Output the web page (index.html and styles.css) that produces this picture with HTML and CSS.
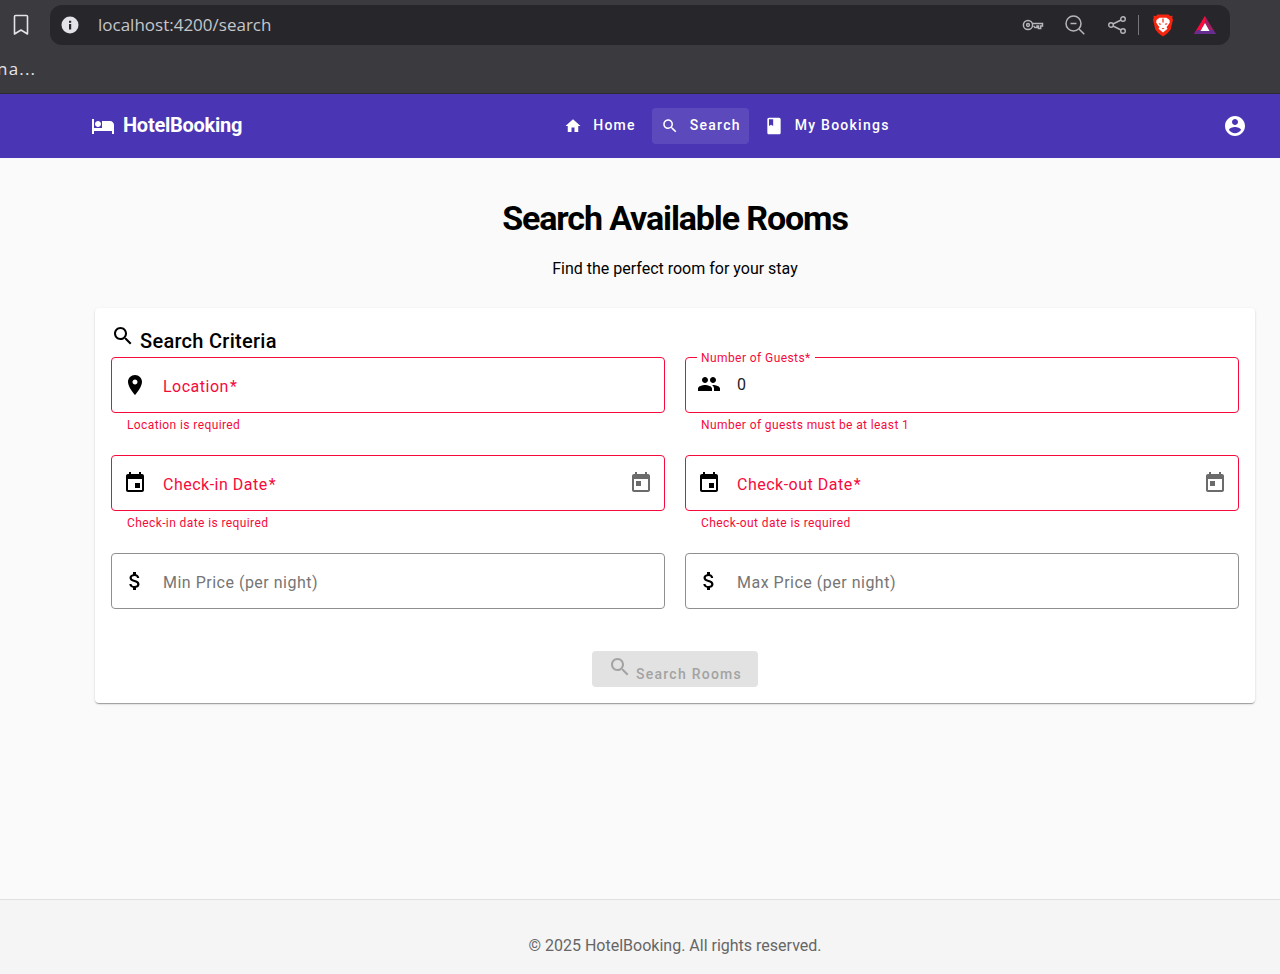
FILE: index.html
```html
<!doctype html>
<html>
<head>
<meta charset="utf-8">
<meta name="viewport" content="width=device-width, initial-scale=1.0">
<link rel="stylesheet" href="styles.css">
<title>HotelBooking</title>
</head>
<body>
<svg class="sprite" width="0" height="0">
  <symbol id="i-hotel" viewBox="0 0 24 24"><path d="M7 13c1.66 0 3-1.34 3-3S8.66 7 7 7s-3 1.34-3 3 1.34 3 3 3zm12-6h-8v7H3V5H1v15h2v-3h18v3h2v-9c0-2.21-1.79-4-4-4z"/></symbol>
  <symbol id="i-home" viewBox="0 0 24 24"><path d="M10 20v-6h4v6h5v-8h3L12 3 2 12h3v8z"/></symbol>
  <symbol id="i-search" viewBox="0 0 24 24"><path d="M15.5 14h-.79l-.28-.27C15.41 12.59 16 11.11 16 9.5 16 5.91 13.09 3 9.5 3S3 5.91 3 9.5 5.91 16 9.5 16c1.61 0 3.09-.59 4.23-1.57l.27.28v.79l5 4.99L20.49 19l-4.99-5zm-6 0C7.01 14 5 11.99 5 9.5S7.01 5 9.5 5 14 7.01 14 9.5 11.99 14 9.5 14z"/></symbol>
  <symbol id="i-book" viewBox="0 0 24 24"><path d="M18 2H6c-1.1 0-2 .9-2 2v16c0 1.1.9 2 2 2h12c1.1 0 2-.9 2-2V4c0-1.1-.9-2-2-2zM6 4h5v8l-2.5-1.5L6 12V4z"/></symbol>
  <symbol id="i-account" viewBox="0 0 24 24"><path d="M12 2C6.48 2 2 6.48 2 12s4.48 10 10 10 10-4.48 10-10S17.52 2 12 2zm0 3c1.66 0 3 1.34 3 3s-1.34 3-3 3-3-1.34-3-3 1.34-3 3-3zm0 14.2c-2.5 0-4.71-1.28-6-3.22.03-1.99 4-3.08 6-3.08 1.99 0 5.97 1.09 6 3.08-1.29 1.94-3.5 3.22-6 3.22z"/></symbol>
  <symbol id="i-place" viewBox="0 0 24 24"><path d="M12 2C8.13 2 5 5.13 5 9c0 5.25 7 13 7 13s7-7.75 7-13c0-3.87-3.13-7-7-7zm0 9.5c-1.38 0-2.5-1.12-2.5-2.5s1.12-2.5 2.5-2.5 2.5 1.12 2.5 2.5-1.12 2.5-2.5 2.5z"/></symbol>
  <symbol id="i-people" viewBox="0 0 24 24"><path d="M16 11c1.66 0 2.99-1.34 2.99-3S17.66 5 16 5c-1.66 0-3 1.34-3 3s1.34 3 3 3zm-8 0c1.66 0 2.99-1.34 2.99-3S9.66 5 8 5C6.34 5 5 6.34 5 8s1.34 3 3 3zm0 2c-2.33 0-7 1.17-7 3.5V19h14v-2.5c0-2.33-4.67-3.5-7-3.5zm8 0c-.29 0-.62.02-.97.05 1.16.84 1.97 1.97 1.97 3.45V19h6v-2.5c0-2.33-4.67-3.5-7-3.5z"/></symbol>
  <symbol id="i-event" viewBox="0 0 24 24"><path d="M17 12h-5v5h5v-5zM16 1v2H8V1H6v2H5c-1.11 0-1.99.9-1.99 2L3 19c0 1.1.89 2 2 2h14c1.1 0 2-.9 2-2V5c0-1.1-.9-2-2-2h-1V1h-2zm3 18H5V8h14v11z"/></symbol>
  <symbol id="i-calendar" viewBox="0 0 24 24"><path d="M19 3h-1V1h-2v2H8V1H6v2H5c-1.11 0-1.99.9-1.99 2L3 19c0 1.1.89 2 2 2h14c1.1 0 2-.9 2-2V5c0-1.1-.9-2-2-2zm0 16H5V8h14v11zM7 10h5v5H7z"/></symbol>
  <symbol id="i-money" viewBox="0 0 24 24"><path d="M11.8 10.9c-2.27-.59-3-1.2-3-2.15 0-1.09 1.01-1.85 2.7-1.85 1.78 0 2.44.85 2.5 2.1h2.21c-.07-1.72-1.12-3.3-3.21-3.81V3h-3v2.16c-1.94.42-3.5 1.68-3.5 3.61 0 2.31 1.91 3.46 4.7 4.13 2.5.6 3 1.48 3 2.41 0 .69-.49 1.79-2.7 1.79-2.06 0-2.87-.92-2.98-2.1h-2.2c.12 2.19 1.76 3.42 3.68 3.83V21h3v-2.15c1.95-.37 3.5-1.5 3.5-3.55 0-2.84-2.43-3.81-4.7-4.4z"/></symbol>
</svg>

<div class="browser">
  <div class="toolbar">
    <svg class="bookmark" width="18" height="22" viewBox="0 0 18 22"><path d="M2.5 2.5a1 1 0 0 1 1-1h11a1 1 0 0 1 1 1v17.5l-6.500-4-6.500 4z" fill="none" stroke="#e4e4e8" stroke-width="1.600" stroke-linejoin="round"/></svg>
    <div class="urlbar">
      <svg class="info" width="18" height="18" viewBox="0 0 18 18"><circle cx="9" cy="9" r="8.500" fill="#e2e2e8"/><rect x="8" y="8" width="2.200" height="5.500" fill="#27262b"/><rect x="8" y="4.800" width="2.200" height="2" fill="#27262b"/></svg>
      <span class="url">localhost:4200/search</span>
      <div class="url-tools">
        <svg class="key" width="22" height="14" viewBox="0 0 22 14"><g fill="none" stroke="#b5b5ba" stroke-width="1.500"><circle cx="6" cy="7" r="4.600"/><circle cx="6" cy="7" r="1.400"/><path d="M10.600 5.500h9.900v2.500l-1.800 0v2.500h-2.200v-2.500h-1.500v1.500h-2l-1.400-1.500"/></g></svg>
        <svg class="zoom" width="20" height="20" viewBox="0 0 20 20"><g fill="none" stroke="#b5b5ba" stroke-width="1.500"><circle cx="8.500" cy="8.500" r="7.500"/><path d="M14 14l5.300 5.300M5.500 8.500h6"/></g></svg>
        <svg class="share" width="18" height="18" viewBox="0 0 18 18"><g fill="none" stroke="#b5b5ba" stroke-width="1.400"><circle cx="3" cy="9" r="2.300"/><circle cx="15" cy="3" r="2.300"/><circle cx="15" cy="15" r="2.300"/><path d="M5 8l8-4M5 10l8 4"/></g></svg>
        <span class="divider"></span>
        <svg class="brave" width="20" height="23" viewBox="0 0 20 23"><path d="M4.500 0.500h11l1.500 1.500 2.500-.3-.2 2.300.7 1.700-2.300 9.800-3.500 4-4.200 3-4.200-3-3.500-4-2.300-9.800.7-1.700-.2-2.300 2.500.3z" fill="#f5240f"/><path d="M3.500 6l3-2.300h7l3 2.300.3 2.500-2.300 3.500-1 1 1 1.800-4.500 3.700-4.500-3.700 1-1.800-1-1-2.300-3.500z" fill="#fff"/><path d="M5.500 9l3 .9-1.600 1.100zM14.500 9l-3 .9 1.600 1.100zM8.500 14h3l-1.500 1.300zM9.400 4.500h1.200v4h-1.200z" fill="#f5240f"/></svg>
        <svg class="bat" width="24" height="20" viewBox="0 0 24 20"><path d="M12 1L23 19H1z" fill="#9e1f63"/><path d="M12 1L1 19h4.500L12 7z" fill="#ff0a3c"/><path d="M1 19h22l-3-4H4z" fill="#662d91"/><path d="M12 8l4.500 8H7.500z" fill="#fff"/></svg>
      </div>
    </div>
  </div>
  <div class="bookmarks">na...</div>
</div>

<nav class="navbar">
  <a class="brand"><svg class="icon"><use href="#i-hotel"/></svg><span>HotelBooking</span></a>
  <div class="nav-links">
    <a class="nav-link"><svg class="icon-sm"><use href="#i-home"/></svg>Home</a>
    <a class="nav-link active"><svg class="icon-sm"><use href="#i-search"/></svg>Search</a>
    <a class="nav-link"><svg class="icon-sm book"><use href="#i-book"/></svg>My Bookings</a>
  </div>
  <svg class="icon account"><use href="#i-account"/></svg>
</nav>

<main class="content">
  <h1>Search Available Rooms</h1>
  <p class="subtitle">Find the perfect room for your stay</p>

  <section class="card">
    <h2 class="card-title"><svg class="icon"><use href="#i-search"/></svg><span>Search Criteria</span></h2>
    <form class="form-grid">
      <div class="field invalid">
        <div class="control">
          <svg class="icon"><use href="#i-place"/></svg>
          <span class="label">Location<span class="req">*</span></span>
        </div>
        <div class="hint">Location is required</div>
      </div>
      <div class="field invalid">
        <div class="control">
          <span class="float-label">Number of Guests*</span>
          <svg class="icon guests"><use href="#i-people"/></svg>
          <span class="value">0</span>
        </div>
        <div class="hint">Number of guests must be at least 1</div>
      </div>
      <div class="field invalid">
        <div class="control">
          <svg class="icon"><use href="#i-event"/></svg>
          <span class="label">Check-in Date<span class="req">*</span></span>
          <svg class="icon toggle"><use href="#i-calendar"/></svg>
        </div>
        <div class="hint">Check-in date is required</div>
      </div>
      <div class="field invalid">
        <div class="control">
          <svg class="icon"><use href="#i-event"/></svg>
          <span class="label">Check-out Date<span class="req">*</span></span>
          <svg class="icon toggle"><use href="#i-calendar"/></svg>
        </div>
        <div class="hint">Check-out date is required</div>
      </div>
      <div class="field">
        <div class="control">
          <svg class="icon"><use href="#i-money"/></svg>
          <span class="label">Min Price (per night)</span>
        </div>
      </div>
      <div class="field">
        <div class="control">
          <svg class="icon"><use href="#i-money"/></svg>
          <span class="label">Max Price (per night)</span>
        </div>
      </div>
    </form>
    <div class="actions">
      <button class="search-btn" type="button" disabled><svg class="icon"><use href="#i-search"/></svg><span>Search Rooms</span></button>
    </div>
  </section>
</main>

<footer class="footer">© 2025 HotelBooking. All rights reserved.</footer>
</body>
</html>
```

FILE: styles.css
```css
* {
    box-sizing: border-box;
}
body {
    margin: 0;
    display: flex;
    flex-direction: column;
    height: 974px;
    overflow: hidden;
    font-family: Roboto, "Liberation Sans", sans-serif;
    font-size: 16px;
    color: #000;
    background-color: #fafafa;
}
.sprite {
    position: absolute;
}
.icon {
    width: 24px;
    height: 24px;
    flex: none;
    fill: currentColor;
}
.icon-sm {
    width: 18px;
    height: 18px;
    flex: none;
    fill: currentColor;
}

/* browser chrome */
.browser {
    height: 94px;
    flex: none;
    padding-top: 5px;
    background-color: #3b3a3f;
    border-bottom: 1px solid #2c2b30;
}
.toolbar {
    display: flex;
    align-items: center;
    height: 40px;
}
.bookmark {
    margin-left: 12px;
    margin-right: 20px;
}
.urlbar {
    display: flex;
    align-items: center;
    width: 1180px;
    height: 40px;
    padding: 0 13px 0 11px;
    border-radius: 12px;
    background-color: #27262b;
}
.url {
    margin: -2px 0 0 19px;
    font-family: "Open Sans", sans-serif;
    font-size: 17px;
    color: #c4c7cc;
}
.url-tools {
    display: flex;
    align-items: center;
    margin-left: auto;
}
.zoom {
    margin-left: 21px;
}
.share {
    margin-left: 23px;
}
.divider {
    width: 1px;
    height: 20px;
    margin-left: 12px;
    background-color: #77767b;
}
.brave {
    margin-left: 14px;
}
.bat {
    margin-left: 20px;
}
.bookmarks {
    margin: 12px 0 0 -3px;
    font-family: "Open Sans", sans-serif;
    font-size: 17px;
    letter-spacing: 1.2px;
    color: #e6e6ea;
}

/* navbar */
.navbar {
    display: flex;
    align-items: center;
    height: 64px;
    flex: none;
    padding: 0 33px 0 91px;
    color: #fff;
    background-color: #4a35b5;
}
.brand {
    display: flex;
    align-items: center;
    gap: 8px;
    font-size: 20px;
    font-weight: 700;
    letter-spacing: -0.25px;
}
.brand span {
    margin-top: -2px;
}
.nav-links {
    display: flex;
    align-items: center;
    gap: 8px;
    margin-left: 313px;
}
.nav-link {
    display: flex;
    align-items: center;
    gap: 11px;
    height: 36px;
    padding: 0 8px 2px 9px;
    border-radius: 4px;
    font-size: 14px;
    font-weight: 500;
    letter-spacing: 1.25px;
}
.nav-link .icon-sm {
    margin-top: 2px;
}
.nav-link .book {
    width: 20px;
    height: 20px;
    margin-left: -2px;
}
.nav-link.active {
    background-color: rgba(255, 255, 255, 0.1);
}
.account {
    margin-left: auto;
}

/* page */
.content {
    flex: 1;
    padding: 0 25px 0 95px;
}
h1 {
    margin: 42px 0 0;
    font-size: 34px;
    line-height: 36px;
    font-weight: 700;
    letter-spacing: -1.12px;
    text-align: center;
}
.subtitle {
    margin: 21px 0 0;
    line-height: 24px;
    text-align: center;
}
.card {
    height: 395px;
    margin-top: 27px;
    padding: 16px;
    border-radius: 4px;
    background-color: #fff;
    box-shadow: 0 2px 1px -1px rgba(0, 0, 0, 0.2), 0 1px 1px 0 rgba(0, 0, 0, 0.14), 0 1px 3px 0 rgba(0, 0, 0, 0.12);
}
.card-title {
    display: flex;
    align-items: flex-start;
    gap: 5px;
    height: 33px;
    margin: 0;
    font-size: 20px;
    line-height: 32px;
    font-weight: 500;
    letter-spacing: 0.28px;
}
.card-title span {
    margin-top: 1px;
}
.form-grid {
    display: grid;
    grid-template-columns: 1fr 1fr;
    column-gap: 20px;
}
.field {
    height: 98px;
}
.control {
    display: flex;
    align-items: center;
    position: relative;
    height: 56px;
    padding: 0 11px;
    border: 1px solid #8f8f8f;
    border-radius: 4px;
    letter-spacing: 0.5px;
}
.field.invalid .control {
    border-color: #f50a3c;
}
.label {
    margin-top: 2px;
    margin-left: 16px;
    color: #757575;
}
.field.invalid .label {
    color: #f50a3c;
}
.req {
    margin-left: 1px;
}
.value {
    margin-left: 16px;
    margin-top: -2px;
    color: #1c1b1f;
}
.guests {
    margin-top: -2px;
}
.float-label {
    position: absolute;
    left: 11px;
    top: -8px;
    padding: 0 4px;
    background-color: #fff;
    font-size: 12px;
    line-height: 16px;
    letter-spacing: 0.42px;
    color: #f50a3c;
}
.toggle {
    margin-left: auto;
    color: #6b6b6b;
}
.hint {
    padding: 4px 16px 0;
    font-size: 12px;
    line-height: 16px;
    letter-spacing: 0.4px;
    color: #f50a3c;
}
.actions {
    display: flex;
    justify-content: center;
}
.search-btn {
    display: flex;
    align-items: flex-start;
    gap: 4px;
    height: 36px;
    padding: 4px 16px 0;
    border: 0;
    border-radius: 4px;
    font-family: inherit;
    font-size: 14px;
    font-weight: 500;
    letter-spacing: 1.25px;
    color: #a3a3a3;
    background-color: #e2e2e2;
}
.search-btn span {
    margin-top: 11px;
}
.footer {
    height: 75px;
    flex: none;
    padding: 37px 0 0 70px;
    border-top: 1px solid #e0e0e0;
    background-color: #f5f5f5;
    color: #666;
    line-height: 18px;
    text-align: center;
}
```
